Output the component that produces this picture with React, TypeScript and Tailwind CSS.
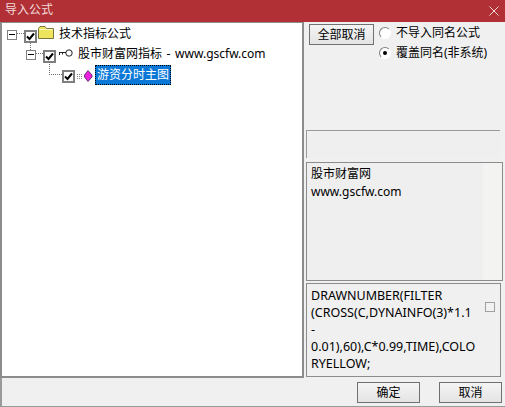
const FONT = "font-['Noto_Sans','Noto_Sans_CJK_SC',sans-serif]";

function Check() {
  return (
    <span className="flex h-[13px] w-[13px] shrink-0 items-center justify-center border-2 border-[#7f7f7f] bg-white">
      <svg width="9" height="9" viewBox="0 0 9 9">
        <path d="M1 4.5 L3.5 7 L8 1.5" fill="none" stroke="#000" strokeWidth="2" />
      </svg>
    </span>
  );
}

function Minus() {
  return (
    <span className="-mt-[3px] flex h-[10px] w-[10px] shrink-0 items-center justify-center border border-[#808080] bg-white">
      <span className="h-px w-[6px] bg-black" />
    </span>
  );
}

function Folder() {
  return (
    <svg width="16" height="13" viewBox="0 0 16 13" className="shrink-0">
      <path d="M0.5 12.5 V2.5 L2 0.5 H7 L8.5 2.5 H15.5 V12.5 Z" fill="#eee45e" stroke="#77773f" />
      <path d="M1.5 3.5 H14.5" stroke="#fffcc0" />
    </svg>
  );
}

function Key() {
  return (
    <svg width="15" height="8" viewBox="0 0 15 8" className="shrink-0">
      <circle cx="11" cy="4" r="3.2" fill="#fff" stroke="#222" />
      <path d="M8 3.5 H1 M1.5 3.5 V6 M4.5 3.5 V5.5" fill="none" stroke="#222" />
    </svg>
  );
}

function Gem() {
  return (
    <svg width="16" height="12" viewBox="0 0 16 12" className="shrink-0">
      <path d="M0 4.5 H6 M0 6.5 H6 M0 8.5 H6" stroke="#888" strokeDasharray="1 1" />
      <path d="M11 0.5 L15 5 L15 7 L11 11.5 L7.5 7 L7.5 5 Z" fill="#ee22dd" stroke="#442266" strokeWidth="0.8" />
    </svg>
  );
}

function Radio({ checked }: { checked?: boolean }) {
  return (
    <span className="flex h-[12px] w-[12px] shrink-0 items-center justify-center rounded-full border border-t-[#808080] border-l-[#808080] border-r-white border-b-white bg-white">
      {checked && <span className="h-[4px] w-[4px] rounded-full bg-black" />}
    </span>
  );
}

function Dots({ className }: { className: string }) {
  return <span className={`absolute border-dotted border-[#707070] ${className}`} />;
}

function Button({ label, className }: { label: string; className: string }) {
  return (
    <button
      type="button"
      className={`flex items-center justify-center border border-[#707070] bg-gradient-to-b from-[#f4f4f4] to-[#e4e4e4] text-[12px] text-black ${className}`}
    >
      {label}
    </button>
  );
}

export default function App() {
  return (
    <div className={`flex h-[407px] w-[505px] flex-col overflow-hidden bg-[#f0f0f0] text-[12px] leading-none text-black ${FONT}`}>
      <div className="flex h-[22px] shrink-0 items-center justify-between bg-[#b03036] pl-[5px] pr-[6px] text-[12px] text-[#f3dcdc]">
        <span className="-mt-[2px]">导入公式</span>
        <svg width="10" height="10" viewBox="0 0 10 10">
          <path d="M0.5 0.5 L9.5 9.5 M9.5 0.5 L0.5 9.5" stroke="#f4d8d8" />
        </svg>
      </div>

      <div className="flex h-[356px] shrink-0">
        <div className="relative h-full w-[304px] shrink-0 border-t border-r-2 border-b-2 border-l-2 border-[#8c8c8c] bg-white pt-[3px]">
          <Dots className="left-[15px] top-[10px] w-[7px] border-t" />
          <Dots className="left-[28px] top-[20px] h-[7px] border-l" />
          <Dots className="left-[34px] top-[30px] w-[7px] border-t" />
          <Dots className="left-[47px] top-[39px] h-[13px] border-l" />
          <Dots className="left-[47px] top-[51px] w-[13px] border-b" />

          <div className="flex h-[20px] items-center pl-[5px]">
            <Minus />
            <span className="ml-[7px]"><Check /></span>
            <span className="-mt-[8px] ml-[1px]"><Folder /></span>
            <span className="-mt-[5px] ml-[5px]">技术指标公式</span>
          </div>
          <div className="flex h-[20px] items-center pl-[24px]">
            <Minus />
            <span className="ml-[7px]"><Check /></span>
            <span className="-mt-[6px] ml-[2px]"><Key /></span>
            <span className="-mt-[5px] ml-[5px] [word-spacing:1.5px]">股市财富网指标 - www.gscfw.com</span>
          </div>
          <div className="flex h-[20px] items-center pl-[60px]">
            <Check />
            <span className="ml-[2px]"><Gem /></span>
            <span className="-mt-[3px] ml-[2px] flex h-[20px] w-[76px] items-center justify-center border border-dotted border-black bg-[#0a78d7] text-white">
              游资分时主图
            </span>
          </div>
        </div>

        <div className="flex min-w-0 flex-1 flex-col pl-[2px]">
          <div className="flex h-[108px] shrink-0 items-start pl-[3px]">
            <Button label="全部取消" className="mt-[2px] h-[21px] w-[65px] border-[#6a6a6a]" />
            <div className="ml-[5px] flex flex-col gap-[8px] pt-[5px]">
              <div className="flex h-[12px] items-center gap-[5px]">
                <Radio />
                <span>不导入同名公式</span>
              </div>
              <div className="flex h-[12px] items-center gap-[5px]">
                <Radio checked />
                <span>覆盖同名(非系统)</span>
              </div>
            </div>
          </div>
          <div className="h-[28px] w-[194px] shrink-0 border-t border-l border-[#9a9a9a] bg-[#efefef]" />
          <div className="mt-[4px] flex h-[119px] w-[197px] shrink-0 border border-[#8c8c8c] bg-[#efefef]">
            <div className="flex-1 pl-[4px] pt-[2px] leading-[18px]">
              <p>股市财富网</p>
              <p>www.gscfw.com</p>
            </div>
            <div className="w-[19px] bg-[#f3f3f1]" />
          </div>
          <div className="mt-[2px] flex h-[94px] w-[195px] shrink-0 border border-[#8c8c8c] pl-[4px] pt-[3px] text-[12.5px] leading-[17px]">
            <p className="w-[170px] whitespace-nowrap">
              DRAWNUMBER(FILTER
              <br />
              (CROSS(C,DYNAINFO(3)*1.1
              <br />-<br />
              0.01),60),C*0.99,TIME),COLO
              <br />
              RYELLOW;
            </p>
            <span className="ml-[4px] mt-[15px] h-[10px] w-[10px] shrink-0 border border-[#a0a0a0] bg-[#f2f2f2]" />
          </div>
        </div>
      </div>

      <div className="flex flex-1 items-start justify-end gap-[19px] border-b border-l-2 border-[#9a9a9a] pt-[4px] pr-[3px]">
        <Button label="确定" className="h-[21px] w-[63px]" />
        <Button label="取消" className="h-[21px] w-[63px]" />
      </div>
    </div>
  );
}
